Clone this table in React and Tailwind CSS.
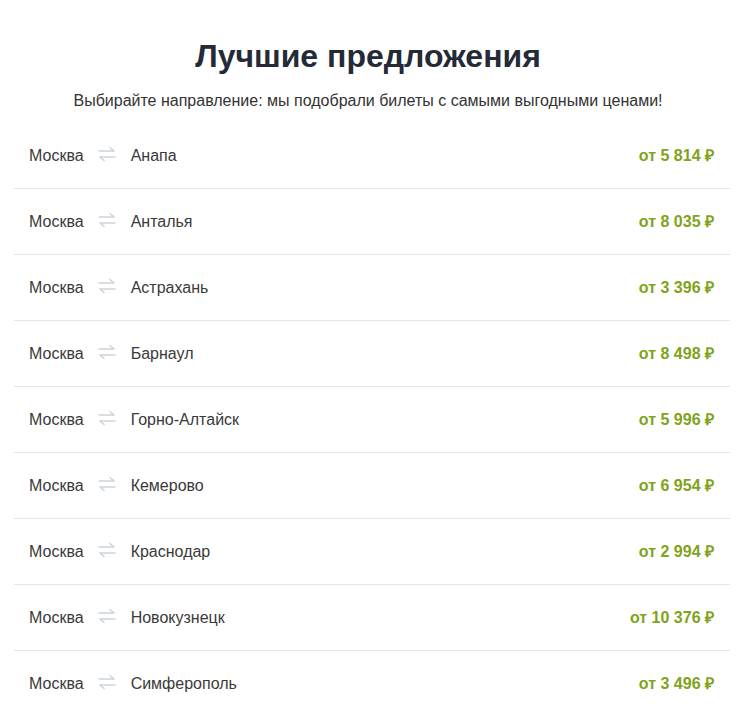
import React from "react";

const routes = [
  { to: "Анапа", price: "5 814" },
  { to: "Анталья", price: "8 035" },
  { to: "Астрахань", price: "3 396" },
  { to: "Барнаул", price: "8 498" },
  { to: "Горно-Алтайск", price: "5 996" },
  { to: "Кемерово", price: "6 954" },
  { to: "Краснодар", price: "2 994" },
  { to: "Новокузнецк", price: "10 376" },
  { to: "Симферополь", price: "3 496" },
];

function SwapIcon() {
  return (
    <svg width="18" height="16" viewBox="0 0 18 16" fill="none" className="shrink-0">
      <path d="M1 5h15M12 1.5l4 3.5" stroke="#cdd2dc" strokeWidth="1.6" strokeLinecap="round" />
      <path d="M17 11H2M6 14.5L2 11" stroke="#cdd2dc" strokeWidth="1.6" strokeLinecap="round" />
    </svg>
  );
}

export default function App() {
  return (
    <div className="min-h-screen bg-white font-['Liberation_Sans',Arial,sans-serif] pt-[36px] px-[14px]">
      <h2 className="text-center text-[32px] leading-[40px] font-bold text-[#242b37]">
        Лучшие предложения
      </h2>
      <p className="mt-[15px] text-center text-[16px] leading-[20px] text-[#333]">
        Выбирайте направление: мы подобрали билеты с самыми выгодными ценами!
      </p>
      <ul className="mt-[12px] w-[716px]">
        {routes.map((r, i) => (
          <li
            key={r.to}
            className={
              "flex items-center h-[66px] pl-[15px] pr-[16px] " +
              (i < routes.length - 1 ? "border-b border-[#e3e5e8]" : "")
            }
          >
            <span className="text-[16px] text-[#3a3a3a]">Москва</span>
            <span className="ml-[14px] mr-[15px] mb-[4px]">
              <SwapIcon />
            </span>
            <span className="text-[16px] text-[#3a3a3a]">{r.to}</span>
            <span className="ml-auto text-[16px] font-bold text-[#7fa31a]">
              от {r.price} ₽
            </span>
          </li>
        ))}
      </ul>
    </div>
  );
}
